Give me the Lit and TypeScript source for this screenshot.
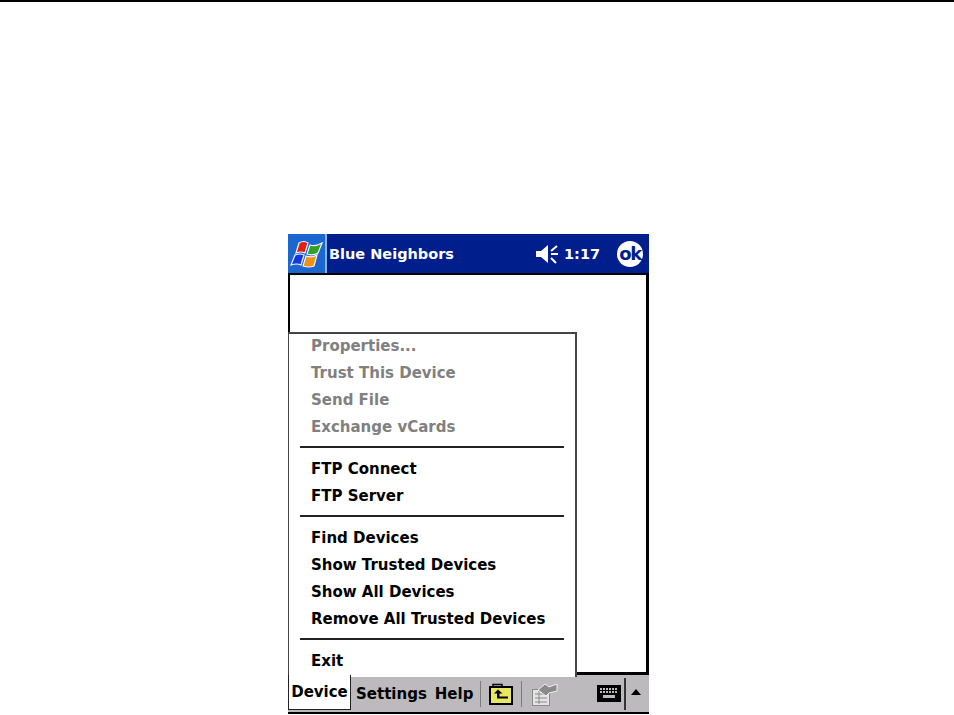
import { LitElement, html, css, svg } from "lit";
import { customElement } from "lit/decorators.js";

const groups = [
  { dim: true, items: ["Properties...", "Trust This Device", "Send File", "Exchange vCards"] },
  { dim: false, items: ["FTP Connect", "FTP Server"] },
  { dim: false, items: ["Find Devices", "Show Trusted Devices", "Show All Devices", "Remove All Trusted Devices"] },
  { dim: false, items: ["Exit"] },
];

@customElement("app-root")
export class AppRoot extends LitElement {
  static styles = css`
    :host { display: block; width: 954px; height: 715px; background: #fff; overflow: hidden;
      font-family: "DejaVu Sans", "Noto Sans", sans-serif; font-weight: 700; font-size: 15px; }
    .rule { height: 2px; background: #000; }
    .device { margin: 232px 0 0 288px; width: 361px; height: 480px; position: relative;
      display: flex; flex-direction: column; }
    .title { height: 39px; background: #001e8c; color: #fff; display: flex; align-items: center; flex: none; }
    .start { width: 39px; height: 39px; background: #1c66d0; border-right: 2px solid #8fb4e8;
      box-sizing: border-box; display: flex; align-items: center; justify-content: center; }
    .name { margin-left: 2px; flex: 1; white-space: nowrap; font-size: 14.5px; padding-top: 1px; }
    .clock { margin-left: 5px; width: 37px; white-space: nowrap; font-size: 14.5px; padding-top: 1px; }
    .speaker { display: block; }
    .ok { width: 26px; height: 26px; border-radius: 50%; background: #fff; color: #001e8c; margin: 0 6px 0 16px;
      display: flex; align-items: center; justify-content: center; font-size: 18px; letter-spacing: -1.5px; }
    .body { flex: 1; background: #fff; border: solid #000; border-width: 2px 3px 3px 2px; }
    .bar { height: 37px; background: #bdbabd; display: flex; align-items: center; flex: none;
      border-bottom: 2px solid #000; box-sizing: content-box; }
    .tab { width: 63px; height: 35px; align-self: flex-start; box-sizing: border-box; background: #fff;
      display: flex; align-items: center; justify-content: center; color: #000; position: relative;
      border: solid #222; border-width: 0 1px 1px 1px; z-index: 2; }
    .menu-label { color: #000; white-space: nowrap; }
    .settings { margin-left: 5px; }
    .help { margin-left: 8px; }
    .vsep { width: 1px; height: 26px; background: #7b7b7b; flex: none; }
    .first { margin: 0 8px 0 7px; }
    .second { margin: 0 9px 0 8px; }
    .grow { flex: 1; }
    .menu { position: absolute; left: 0; top: 98px; width: 289px; height: 345px; background: #fff;
      box-sizing: border-box; border: solid #444; border-width: 2px 2px 0 1px; z-index: 1; }
    .item { height: 27px; line-height: 29px; padding-left: 22px; color: #000; white-space: nowrap; }
    .dim { color: #808080; }
    .sep { height: 15px; display: flex; align-items: center; padding: 0 11px; }
    .sep i { display: block; flex: 1; height: 2px; background: #222; margin-top: -1px; }
    .menu-inner { margin-top: -2px; }
    .kbdsep { width: 2px; height: 32px; background: #333; margin: 0 5px 0 3px; }
    .arrow { width: 0; height: 0; border: solid transparent; border-width: 0 5px 6px; border-bottom-color: #000; margin: -4px 8px 0 0; }
    svg { flex: none; }
  `;

  private flag() {
    return svg`<svg width="34" height="30" viewBox="0 0 34 30">
      <path d="M9 4 Q14 1 18 4 L15 14 Q11 12 6 14 Z" fill="#e02010" stroke="#f4f4ff" stroke-width="1.2"/>
      <path d="M20 6 Q25 8 32 4 L28 14 Q23 17 17 15 Z" fill="#30a020" stroke="#f4f4ff" stroke-width="1.2"/>
      <path d="M5 16 Q10 14 14 16 L11 26 Q7 24 1 26 Z" fill="#1038e0" stroke="#f4f4ff" stroke-width="1.2"/>
      <path d="M16 17 Q22 19 27 16 L24 27 Q19 29 13 27 Z" fill="#f09010" stroke="#f4f4ff" stroke-width="1.2"/>
    </svg>`;
  }

  private speaker() {
    return svg`<svg class="speaker" width="24" height="24" viewBox="0 0 24 24">
      <path d="M1 9h5l7-6v18l-7-6H1z" fill="#fff"/>
      <path d="M16 9l6-5M16 12h7M16 16l5 5" stroke="#fff" stroke-width="2" fill="none"/>
    </svg>`;
  }

  private folder() {
    return svg`<svg width="24" height="22" viewBox="0 0 24 22">
      <path d="M4 4V1.500h9V4" fill="none" stroke="#000" stroke-width="1.5"/>
      <rect x="1" y="4" width="22" height="17" fill="#e8e860" stroke="#000" stroke-width="2"/>
      <path d="M9 6.500l-4 4h3v5h11v-2H10.500v-3h3z" fill="#000"/>
    </svg>`;
  }

  private props() {
    return svg`<svg width="27" height="24" viewBox="0 0 27 24">
      <rect x="1.500" y="7.500" width="17" height="16" fill="#e4e4e4" stroke="#8a8a8a"/>
      <path d="M4 12h12M4 16h12M4 20h12M8 9v13" stroke="#8a8a8a"/>
      <path d="M7 8l7-6 4 3 8-3v7l-8 2-3 3z" fill="#8a8a8a" stroke="#f0f0f0"/>
    </svg>`;
  }

  private keyboard() {
    return svg`<svg width="24" height="17" viewBox="0 0 24 17">
      <rect width="24" height="17" fill="#000"/>
      <path d="M3 4h18M3 7h18" stroke="#bdbabd" stroke-width="2" stroke-dasharray="2 1"/>
      <rect x="6" y="10" width="12" height="3" fill="#bdbabd"/>
    </svg>`;
  }

  render() {
    return html`
      <div class="rule"></div>
      <div class="device">
        <div class="title">
          <div class="start">${this.flag()}</div>
          <span class="name">Blue Neighbors</span>
          ${this.speaker()}
          <span class="clock">1:17</span>
          <div class="ok">ok</div>
        </div>
        <div class="body"></div>
        <div class="menu">
          <div class="menu-inner">
            ${groups.map((g, i) => html`
              ${i > 0 ? html`<div class="sep"><i></i></div>` : ""}
              ${g.items.map((t) => html`<div class="item ${g.dim ? "dim" : ""}">${t}</div>`)}
            `)}
          </div>
        </div>
        <div class="bar">
          <div class="tab">Device</div>
          <span class="menu-label settings">Settings</span>
          <span class="menu-label help">Help</span>
          <div class="vsep first"></div>
          ${this.folder()}
          <div class="vsep second"></div>
          ${this.props()}
          <div class="grow"></div>
          ${this.keyboard()}
          <div class="kbdsep"></div>
          <div class="arrow"></div>
        </div>
      </div>
    `;
  }
}
